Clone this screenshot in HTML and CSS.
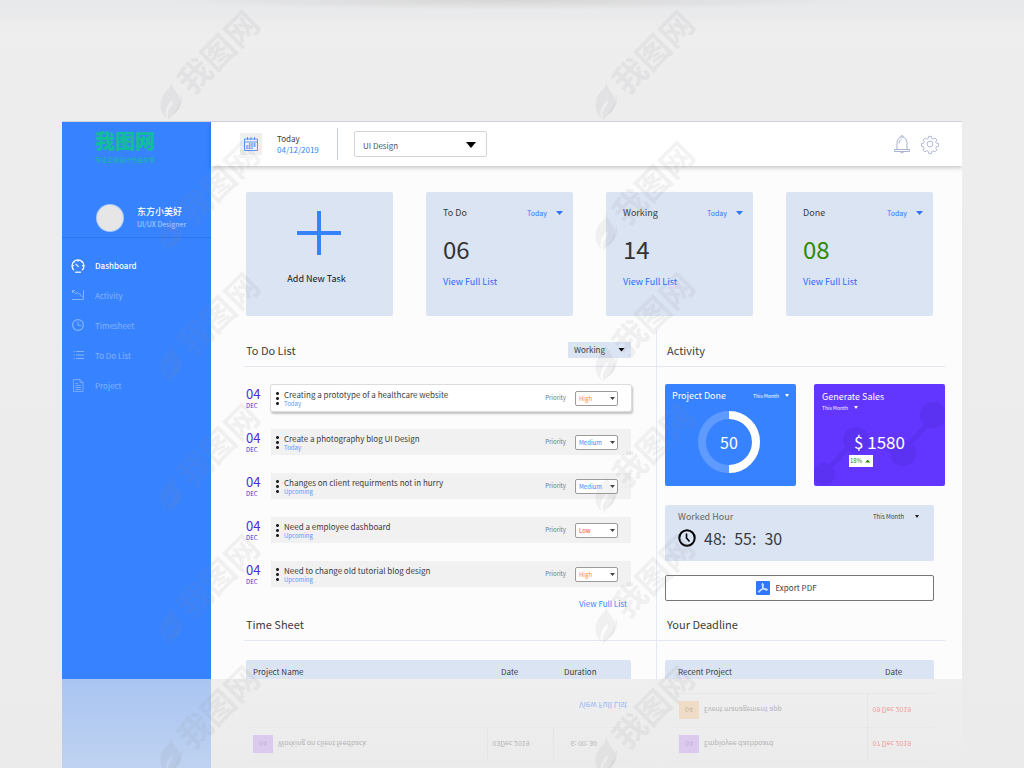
FILE: index.html
```html
<!DOCTYPE html>
<html lang="en">
<head>
<meta charset="utf-8">
<meta name="viewport" content="width=device-width, initial-scale=1">
<title>Dashboard</title>
<link rel="stylesheet" href="styles.css">
</head>
<body>
<div class="stage">
  <div class="app">
    <aside class="sidebar">
      <div class="logo">
        <div class="logo-name">我图网</div>
        <div class="logo-tag">专注正版设计作品交易</div>
      </div>
      <div class="profile">
        <span class="avatar"></span>
        <div>
          <div class="profile-name">东方小美好</div>
          <div class="profile-role">UI/UX Designer</div>
        </div>
      </div>
      <nav class="nav">
        <a href="#" class="nav-item active">
          <svg viewBox="0 0 14 14"><path d="M3 11.300A6 6 0 1 1 11 11.300" stroke-width="1.300"/><path d="M4 13.200h6" stroke-width="1.200"/><path d="M4.600 4.800 7.600 7.800M7 1v1.700M1.500 6.600H3M11 6.600h1.500M10.300 3.400l.8-.8M2.800 2.600l.8.8" stroke-width="1.100"/></svg>
          Dashboard</a>
        <a href="#" class="nav-item">
          <svg viewBox="0 0 14 14"><path d="M1 10.500h11.500V1M1.500 4V1.500H4M1.500 1.500 5 5l2-1.500L11.500 8"/></svg>
          Activity</a>
        <a href="#" class="nav-item">
          <svg viewBox="0 0 14 14"><circle cx="7" cy="6" r="5.400" stroke-width="1.200"/><path d="M7 2.500V6.300h3.400"/></svg>
          Timesheet</a>
        <a href="#" class="nav-item">
          <svg viewBox="0 0 14 14"><path d="M5 2.500h8M5 6h8M5 9.500h8M2.500 2.500h1.200M2.500 6h1.200M2.500 9.500h1.200"/></svg>
          To Do List</a>
        <a href="#" class="nav-item">
          <svg viewBox="0 0 14 14"><path d="M2.500.5h6.500l3 3v9h-9.500zM9 .5v3h3M4.500 4.500H7M4.500 6.500h5.500M4.500 8.500h5.500M4.500 10.500h5.500" stroke-width=".8"/></svg>
          Project</a>
      </nav>
    </aside>

    <div class="page">
      <header class="topbar">
        <span class="cal-tile">
          <svg viewBox="0 0 16 16"><path d="M1.500 3h13v11.500h-13zM1.500 6h13M4.500 1v3M8 1v3M11.500 1v3"/><path d="M6 8h7M3 10h10M3 12.300h7M4 9v4M6.500 7v6M9 7v6M11.500 7v4" stroke-width=".7"/></svg>
        </span>
        <div class="today">
          <div>Today</div>
          <div class="today-date">04/12/2019</div>
        </div>
        <span class="pick pick-main"><select aria-label="Department"><option>UI Design</option></select></span>
        <div class="top-actions">
          <button type="button" aria-label="Notifications">
            <svg viewBox="0 0 18 20"><path d="M1.500 15.500h15v2h-15zM3.500 15.500c.6-1.500.5-3 .5-6C4 5.500 6 3 9 3s5 2.500 5 6.500c0 3-.1 4.500.5 6M7.800 3c-.3-2 2.700-2 2.400 0M7 17.500c.5 1.700 3.500 1.700 4 0M6 9.500c0-2 .8-3.500 2.500-4"/></svg>
          </button>
          <button type="button" aria-label="Settings">
            <svg viewBox="0 0 20 20"><circle cx="10" cy="10" r="3.200"/><path d="M8.500 1.500h3l.5 2.400 1.500.7 2.100-1.300 2.100 2.100-1.300 2.100.7 1.500 2.400.5v3l-2.400.5-.7 1.500 1.300 2.100-2.100 2.100-2.100-1.300-1.500.7-.5 2.400h-3l-.5-2.400-1.500-.7-2.100 1.300-2.100-2.100 1.300-2.100-.7-1.500-2.400-.5v-3l2.400-.5.7-1.500-1.300-2.100 2.100-2.100 2.100 1.300 1.500-.7z" stroke-linejoin="round"/></svg>
          </button>
        </div>
      </header>

      <main class="main">
        <section class="stats">
          <button type="button" class="stat add">
            <svg viewBox="0 0 44 44"><path d="M22 0v44M0 22h44" stroke="#3782ff" stroke-width="4"/></svg>
            Add New Task
          </button>
          <div class="stat">
            <div class="stat-head"><h3>To Do</h3><span class="pick pick-text"><select aria-label="To do period"><option>Today</option></select></span></div>
            <div class="stat-num">06</div>
            <a href="#">View Full List</a>
          </div>
          <div class="stat">
            <div class="stat-head"><h3>Working</h3><span class="pick pick-text"><select aria-label="Working period"><option>Today</option></select></span></div>
            <div class="stat-num">14</div>
            <a href="#">View Full List</a>
          </div>
          <div class="stat">
            <div class="stat-head"><h3>Done</h3><span class="pick pick-text"><select aria-label="Done period"><option>Today</option></select></span></div>
            <div class="stat-num green">08</div>
            <a href="#">View Full List</a>
          </div>
        </section>

        <div class="columns">
          <section class="col col-left">
            <div class="head"><h2>To Do List</h2><span class="pick pick-work"><select aria-label="List filter"><option>Working</option></select></span></div>
            <ul class="tasks">
              <li><div class="day">04<small>DEC</small></div><div class="task raised"><i class="dots"></i><div class="task-text">Creating a prototype of a healthcare website<small>Today</small></div><label for="p1">Priority</label><span class="pick pick-prio high"><select id="p1"><option>High</option></select></span></div></li>
              <li><div class="day">04<small>DEC</small></div><div class="task"><i class="dots"></i><div class="task-text">Create a photography blog UI Design<small>Today</small></div><label for="p2">Priority</label><span class="pick pick-prio medium"><select id="p2"><option>Medium</option></select></span></div></li>
              <li><div class="day">04<small>DEC</small></div><div class="task"><i class="dots"></i><div class="task-text">Changes on client requirments not in hurry<small>Upcoming</small></div><label for="p3">Priority</label><span class="pick pick-prio medium"><select id="p3"><option>Medium</option></select></span></div></li>
              <li><div class="day">04<small>DEC</small></div><div class="task"><i class="dots"></i><div class="task-text">Need a employee dashboard<small>Upcoming</small></div><label for="p4">Priority</label><span class="pick pick-prio low"><select id="p4"><option>Low</option></select></span></div></li>
              <li><div class="day">04<small>DEC</small></div><div class="task"><i class="dots"></i><div class="task-text">Need to change old tutorial blog design<small>Upcoming</small></div><label for="p5">Priority</label><span class="pick pick-prio high"><select id="p5"><option>High</option></select></span></div></li>
            </ul>
            <a href="#" class="more">View Full List</a>
            <div class="head head-low"><h2>Time Sheet</h2></div>
            <table class="sheet">
              <thead><tr><th>Project Name</th><th class="c-date">Date</th><th class="c-dur">Duration</th></tr></thead>
            </table>
          </section>

          <section class="col col-right">
            <div class="head"><h2>Activity</h2></div>
            <div class="tiles">
              <div class="tile blue">
                <div class="tile-head"><h3>Project Done</h3><span class="pick pick-month"><select aria-label="Project period"><option>This Month</option></select></span></div>
                <svg class="donut" viewBox="0 0 64 64"><circle cx="32" cy="32" r="27" stroke="#5f9bff"/><path d="M32 5a27 27 0 0 1 0 54" stroke="#fff"/><text x="32" y="39">50</text></svg>
              </div>
              <div class="tile purple">
                <svg class="nodes" viewBox="0 0 131 102" preserveAspectRatio="none"><path d="M10 90 42 55 88 69 120 32" fill="none" stroke="#5c32f2" stroke-width="5"/><circle cx="10" cy="90" r="11"/><circle cx="42" cy="56" r="13"/><circle cx="89" cy="69" r="13"/><circle cx="119" cy="31" r="13"/></svg>
                <h3>Generate Sales</h3>
                <span class="pick pick-month"><select aria-label="Sales period"><option>This Month</option></select></span>
                <div class="money">$ 1580</div>
                <div class="rate">18% <i></i></div>
              </div>
            </div>
            <div class="hours">
              <div class="hours-head"><h3>Worked Hour</h3><span class="pick pick-month"><select aria-label="Hours period"><option>This Month</option></select></span></div>
              <div class="hours-time">
                <svg viewBox="0 0 18 18"><circle cx="9" cy="9" r="7.700" stroke-width="2"/><path d="M8.500 4.500V9l3 3.500" stroke-width="1.600"/></svg>
                <span>48:</span><span>55:</span><span>30</span>
              </div>
            </div>
            <button type="button" class="export">
              <svg viewBox="0 0 14 14"><rect width="14" height="14" rx="1" fill="#3076ff"/><path d="M6.500 2.500c1.500 0 .7 3-.3 5S3.500 11.500 2.600 11c-.8-.8 2-2.600 4.400-3s4.600-.2 4.500.8c-.2 1-2.500.2-3.800-1.300S5.500 2.500 6.500 2.500z" fill="none" stroke="#fff"/></svg>
              Export PDF
            </button>
            <div class="head head-low"><h2>Your Deadline</h2></div>
            <table class="sheet sheet-right">
              <thead><tr><th>Recent Project</th><th class="c-when">Date</th></tr></thead>
            </table>
          </section>
        </div>
      </main>
    </div>
  </div>

  <div class="mirror" aria-hidden="true">
    <div class="mirror-side"></div>
    <div class="mirror-page">
      <div class="mirror-left">
        <table class="rows">
          <tbody><tr><td class="c-badge"><span class="badge violet">04</span></td><td>Working on client feedback</td><td class="c-mdate">03Dec 2019</td><td class="c-mdur">6: 00: 30</td></tr></tbody>
        </table>
        <span class="more">View Full List</span>
      </div>
      <div class="mirror-right">
        <table class="rows">
          <tbody>
            <tr><td class="c-badge"><span class="badge violet">04</span></td><td>Employee dashboard</td><td class="c-due">07 Dec 2019</td></tr>
            <tr><td class="c-badge"><span class="badge amber">04</span></td><td>Event management app</td><td class="c-due">09 Dec 2019</td></tr>
          </tbody>
        </table>
      </div>
    </div>
  </div>
</div>

<svg class="watermark" aria-hidden="true">
  <defs>
    <pattern id="mark" width="435" height="131" patternUnits="userSpaceOnUse" x="150" y="-2">
      <g fill="#8a8f98" fill-opacity=".1">
        <text x="0" y="0" transform="translate(42 98) rotate(-45)">我图网</text>
        <path d="M21 84c2 9 11 13 9 23-1 7-7 9-12 15 0-6-1-8 2-12 2-3 4-5 2-8-3 4-8 8-6 18-7-7-7-17-2-24 3-4 7-6 7-12z"/>
        <path d="M31 96c3 7-1 17-10 22 6-7 9-12 10-22z"/>
      </g>
    </pattern>
  </defs>
  <rect width="100%" height="100%" fill="url(#mark)"/>
</svg>
</body>
</html>
```
FILE: styles.css
```css
* { box-sizing: border-box; }

body {
  margin: 0;
  height: 100vh;
  overflow: hidden;
  font-family: "Noto Sans CJK SC", "Open Sans", sans-serif;
  font-size: 9px;
  line-height: 12px;
  color: #3c3c3c;
  background:
    radial-gradient(ellipse 340px 10px at 50% 0, #d6d6d6, transparent),
    linear-gradient(#e7e8ea, #eeeeee 36px, #ededee 90px, #ebebec);
}

h2, h3 { margin: 0; font-weight: 400; }
a { color: #1f6cff; text-decoration: none; }
button { font: inherit; color: inherit; border: 0; padding: 0; background: none; }
svg { display: block; fill: none; }
small { display: block; }

.stage {
  display: flex;
  flex-direction: column;
  height: 100%;
  padding: 122px 62px 0;
}

.app {
  display: flex;
  flex: 1;
  min-height: 0;
  overflow: hidden;
  box-shadow: 0 -1px 0 #cfd0dc;
}

/* Sidebar */
.sidebar {
  flex: 0 0 149px;
  background: #3782ff;
  color: #fff;
}

.logo {
  width: 80px;
  margin: 8px 0 0 23px;
  text-align: center;
  color: #12bd9c;
}
.logo-name { font-size: 20px; line-height: 22px; font-weight: 900; }
.logo-tag { font-size: 6px; line-height: 16px; }

.profile {
  display: flex;
  align-items: center;
  gap: 14px;
  height: 46px;
  margin-top: 24px;
  padding: 6px 0 0 35px;
  border-bottom: 1px solid #2f74e8;
}
.avatar {
  width: 26px;
  height: 26px;
  border-radius: 50%;
  background: #e6e6e6;
  box-shadow: 0 0 0 1px #a9c9ff;
}
.profile-name { font-size: 9px; font-weight: 500; }
.profile-role { font-size: 7px; color: #b8d3ff; }

.nav { padding-top: 13px; }
.nav-item {
  display: flex;
  align-items: center;
  gap: 10px;
  height: 30px;
  padding-left: 9px;
  font-size: 8px;
  color: #85b4ff;
}
.nav-item.active { color: #fff; font-weight: 500; }
.nav-item svg { width: 14px; height: 14px; stroke: currentColor; }

/* Top bar */
.page {
  display: flex;
  flex: 1;
  flex-direction: column;
  min-width: 0;
  background: #fcfcfc;
}

.topbar {
  display: flex;
  flex: 0 0 44px;
  align-items: center;
  padding: 0 23px 0 29px;
  background: #fff;
  box-shadow: 0 2px 4px rgba(0, 0, 0, .2);
}
.cal-tile {
  display: grid;
  place-items: center;
  width: 22px;
  height: 22px;
  background: #efefef;
}
.cal-tile svg { width: 16px; height: 16px; stroke: #5a94fa; }

.today {
  width: 61px;
  margin: 0 16px 0 15px;
  padding: 5px 0;
  font-size: 8px;
  line-height: 11px;
  border-right: 1px solid #c9cde4;
}
.today-date { color: #3782ff; }

.top-actions { display: flex; gap: 10px; margin-left: auto; }
.top-actions svg { width: 18px; height: 20px; stroke: #a9b2d0; }

/* Drop-downs */
.pick { position: relative; display: inline-flex; }
.pick select {
  width: 100%;
  margin: 0;
  padding: 0;
  font: inherit;
  color: inherit;
  border: 0;
  border-radius: 2px;
  background: transparent;
  appearance: none;
}
.pick::after {
  content: "";
  position: absolute;
  top: 50%;
  right: 0;
  width: 7px;
  height: 4px;
  margin-top: -2px;
  background: currentColor;
  clip-path: polygon(0 0, 100% 0, 50% 100%);
  pointer-events: none;
}
.pick-main { width: 133px; height: 26px; font-size: 8px; }
.pick-main select { padding: 4px 8px 0; color: #555; border: 1px solid #d4d4d6; }
.pick-main::after { right: 11px; width: 10px; height: 6px; background: #000; }

.pick-text { width: 36px; font-size: 7px; color: #2f74ff; }

.pick-work { width: 63px; height: 16px; font-size: 8px; background: #dbe4f3; }
.pick-work select { padding-left: 6px; }
.pick-work::after { right: 6px; background: #000; }

.pick-prio { width: 43px; height: 15px; font-size: 6px; }
.pick-prio select { padding: 1px 3px 0; border: 1px solid #9b9b9b; background: #fff; }
.pick-prio::after { right: 3px; width: 5px; height: 3px; margin-top: -1px; background: #444; }
.high { color: #ff8b2b; }
.medium { color: #3782ff; }
.low { color: #ff4444; }

.pick-month { width: 36px; font-size: 5px; line-height: 8px; }
.pick-month::after { width: 4px; height: 3px; }

/* Stat cards */
.main {
  display: flex;
  flex: 1;
  flex-direction: column;
  padding-top: 26px;
}
.stats {
  display: grid;
  grid-template-columns: repeat(4, 1fr);
  gap: 33px;
  margin: 0 29px 0 35px;
}
.stat {
  height: 124px;
  padding: 14px 10px 14px 17px;
  border-radius: 2px;
  background: #dbe4f3;
}
.stat-head { display: flex; align-items: center; justify-content: space-between; height: 14px; }
.stat-head h3 { font-size: 9px; }
.stat-num { margin: 13px 0 11px; font-size: 24px; line-height: 32px; color: #333; }
.stat-num.green { color: #2f8a00; }
.stat a { display: block; }
.stat.add {
  display: flex;
  flex-direction: column;
  align-items: center;
  gap: 18px;
  padding: 19px 6px 0 0;
  color: #111;
}
.add svg { width: 44px; height: 44px; margin-left: 5px; }

/* Columns */
.columns {
  display: grid;
  flex: 1;
  grid-template-columns: 1fr 288px;
  margin: 14px 17px 0 33px;
}
.col-left { border-right: 1px solid #e3e8f6; }
.head {
  display: flex;
  align-items: center;
  justify-content: space-between;
  height: 37px;
  padding: 3px 25px 0 2px;
  border-bottom: 1px solid #e3e8f0;
}
.head h2 { font-size: 11px; line-height: 14px; }
.head-low { height: 31px; padding-top: 0; padding-bottom: 2px; }
.col-right .head { padding-left: 10px; }

.tasks {
  display: grid;
  gap: 18px;
  margin: 18px 25px 0 2px;
  padding: 0;
  list-style: none;
}
.tasks li { display: flex; align-items: center; gap: 7px; height: 26px; }
.day { flex: 0 0 18px; padding-top: 1px; font-size: 13px; line-height: 14px; color: #4a2fd6; white-space: nowrap; }
.day small { font-size: 6px; line-height: 10px; }
.task {
  display: flex;
  flex: 1;
  align-items: center;
  height: 26px;
  padding: 0 13px 0 5px;
  background: #f1f1f1;
}
.task.raised {
  background: #fff;
  border-radius: 2px;
  box-shadow: 0 0 0 1px #dcdcdc, 1px 2px 2px 1px #c4c4c4;
}
.dots {
  width: 3px;
  height: 15px;
  margin-right: 5px;
  background: radial-gradient(circle at center, #222 1px, transparent 2px) 0 0 / 3px 5px;
}
.task-text { flex: 1; padding-top: 2px; font-size: 8px; line-height: 10px; white-space: nowrap; }
.task-text small { font-size: 6px; line-height: 8px; color: #5a97ff; }
.task label { margin-right: 9px; font-size: 6px; color: #777; }

.more {
  display: block;
  width: max-content;
  margin: 11px 29px 0 auto;
  color: #3782ff;
  font-size: 8px;
}

.sheet {
  width: calc(100% - 27px);
  margin: 19px 0 0 2px;
  border-collapse: collapse;
  background: #dbe4f3;
  border-radius: 2px;
}
.sheet th { height: 24px; padding: 0 0 0 7px; font-size: 8px; font-weight: 400; text-align: left; }
.sheet .c-date { width: 70px; }
.sheet .c-dur { width: 67px; padding-left: 0; }
.sheet .c-when { width: 56px; }
.sheet-right { width: calc(100% - 19px); margin-left: 8px; }
.sheet-right th:first-child { padding-left: 13px; }

/* Activity */
.tiles { display: grid; grid-template-columns: 1fr 1fr; gap: 18px; margin: 17px 0 0 8px; }
.tile { position: relative; height: 102px; padding: 6px 7px; border-radius: 2px; color: #fff; }
.tile h3 { font-size: 9px; white-space: nowrap; }
.blue { background: #3782ff; }
.tile-head { display: flex; align-items: center; justify-content: space-between; }
.donut { width: 64px; height: 64px; margin: 8px 0 0 25px; stroke-width: 8; }
.donut text { font-size: 16px; text-anchor: middle; fill: #fff; stroke: none; }
.purple { display: flex; flex-direction: column; padding: 7px 8px; background: #6236ff; }
.purple > * { position: relative; }
.purple .nodes { position: absolute; inset: 0; width: 100%; height: 100%; fill: #5c32f2; }
.purple .pick { margin-top: 1px; }
.money { margin-top: 20px; text-align: center; font-size: 17px; line-height: 20px; }
.rate {
  display: flex;
  align-items: center;
  gap: 3px;
  width: 24px;
  height: 12px;
  margin: 3px 0 0 27px;
  padding-left: 1px;
  font-size: 6px;
  color: #2f8a00;
  background: #fff;
}
.rate i { width: 5px; height: 3px; background: #2f8a00; clip-path: polygon(50% 0, 100% 100%, 0 100%); }

.hours {
  height: 56px;
  margin: 19px 11px 0 8px;
  padding: 6px 15px 0 13px;
  border-radius: 2px;
  background: #dbe4f3;
}
.hours-head { display: flex; justify-content: space-between; }
.hours-head h3 { font-size: 9px; color: #666; }
.hours .pick-month { width: 46px; font-size: 6px; }
.hours .pick-month::after { background: #222; }
.hours-time { display: flex; align-items: center; gap: 8px; margin-top: 5px; font-size: 16px; line-height: 20px; }
.hours-time svg { width: 18px; height: 18px; stroke: #000; }

.export {
  display: flex;
  align-items: center;
  justify-content: center;
  gap: 5px;
  width: calc(100% - 19px);
  height: 26px;
  margin: 14px 0 9px 8px;
  padding-right: 26px;
  border: 1px solid #777;
  border-radius: 2px;
  background: #fff;
  font-size: 8px;
}
.export svg { width: 14px; height: 14px; }

/* Floor reflection */
.mirror {
  display: flex;
  flex: 0 0 89px;
  overflow: hidden;
  transform: scaleY(-1);
  background: linear-gradient(#ebebeb, #efefef);
}
.mirror-side { flex: 0 0 149px; background: linear-gradient(#bfd2f0, #a9c5f3); }
.mirror-page {
  display: grid;
  flex: 1;
  grid-template-columns: 1fr 288px;
  padding: 6px 17px 0 33px;
}
.mirror-left { padding-left: 2px; border-right: 1px solid #eaecf2; }
.mirror .more { margin-top: 16px; opacity: .5; }
.rows { width: calc(100% - 25px); border-collapse: collapse; color: #b4b4b4; font-size: 7px; }
.rows td { height: 34px; padding: 0; border-top: 1px solid #e7e8ea; border-bottom: 1px solid #e7e8ea; }
.rows .c-badge { width: 32px; padding-left: 7px; }
.rows .c-mdate { width: 66px; padding-left: 5px; border-left: 1px solid #e5e6ec; }
.rows .c-mdur { width: 78px; padding-left: 17px; border-left: 1px solid #e5e6ec; }
.rows .c-due { width: 67px; padding-left: 5px; border-left: 1px solid #e5e6ec; color: #f09a9a; }
.mirror-right { padding-left: 13px; }
.mirror-right .rows { width: calc(100% - 11px); }
.mirror-right .c-badge { padding-left: 9px; width: 34px; }
.badge {
  display: grid;
  place-items: center;
  width: 20px;
  height: 18px;
  font-size: 7px;
}
.violet { background: #dccaee; color: #c4aedb; }
.amber { background: #eedcc6; color: #c9b59b; }

.watermark {
  position: fixed;
  inset: 0;
  width: 100%;
  height: 100%;
  pointer-events: none;
}
.watermark text { font-size: 33px; font-weight: 700; }
```
